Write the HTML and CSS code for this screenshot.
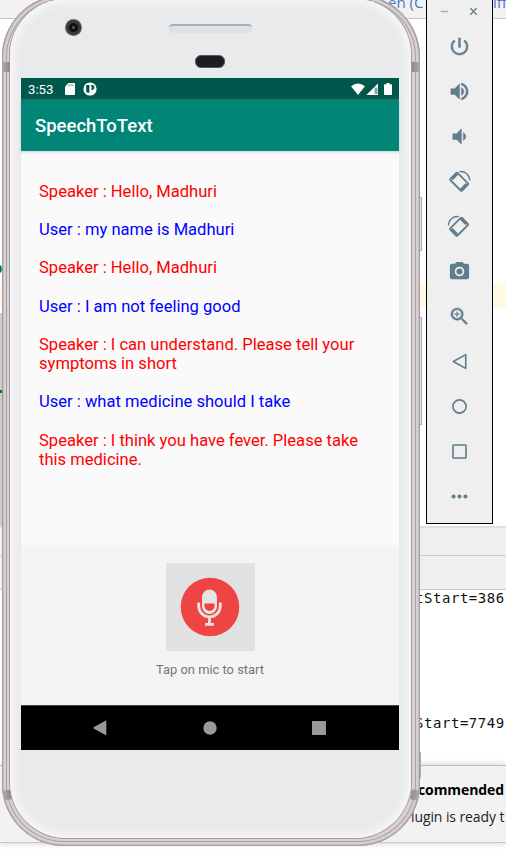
FILE: index.html
```html
<!DOCTYPE html>
<html lang="en">
<head>
<meta charset="utf-8">
<title>SpeechToText</title>
<link rel="stylesheet" href="styles.css">
</head>
<body>
<div class="desktop">
  <div class="ide">
    <div class="ide-tabs"><span>en (C</span><span class="tab-end">iff</span></div>
    <div class="editor">
      <span class="code-mark">p</span>
      <div class="current-line"></div>
      <div class="gutter"><i></i></div>
    </div>
    <div class="pane-bar"></div>
    <div class="pane-bar pane-bar-tall"></div>
    <div class="console">
      <div class="log">tStart=386</div>
      <div class="log">Start=7749</div>
    </div>
    <div class="notice"><b>commended</b><span>lugin is ready t</span></div>
  </div>

  <div class="side-key key-power"></div>
  <div class="side-key key-volume"></div>
  <div class="side-key key-low"></div>
  <div class="phone">
    <i class="antenna ant-tl"></i><i class="antenna ant-tr"></i><i class="antenna ant-bl"></i><i class="antenna ant-br"></i>
    <div class="face">
      <div class="forehead">
        <i class="camera"></i><i class="earpiece"></i><i class="sensor"></i>
      </div>
      <div class="screen">
        <div class="status">
          <span class="clock">3:53</span>
          <svg class="sd" width="10" height="12" viewBox="0 0 10 12"><path fill="#fff" d="M3.5 0H9a1 1 0 0 1 1 1v10a1 1 0 0 1-1 1H1a1 1 0 0 1-1-1V3.5z"/><path stroke="#00574b" stroke-width=".6" d="M4.1 1.3v2M6 1.3v2M7.9 1.3v2"/></svg>
          <svg class="app" width="14" height="14" viewBox="0 0 14 14"><circle cx="7" cy="7" r="6.6" fill="#fff"/><path fill="#00574b" d="M3.2 3.1h3.2v7.3l-1.3.7-1.9-1.4zM8.2 3.1h.9a2.4 2.4 0 0 1 0 4.8h-.9V6.400h.6V5h-.6z"/></svg>
          <span class="fill"></span>
          <svg width="42" height="13" viewBox="0 0 42 13"><path fill="#fff" d="M0 3.2Q7-2.3 14 3.2L7 12zM27 .5V12H15.3z"/><path stroke="#00574b" stroke-width="1" d="M24.2 4.5V11M25.8 4.5V11" opacity=".75"/><path fill="#fff" d="M35.5 0h3v1.2h1.6a.9.9 0 0 1 .9.9V11a1 1 0 0 1-1 1h-6a1 1 0 0 1-1-1V2.1a.9.9 0 0 1 .9-.9h1.6z"/></svg>
        </div>
        <div class="appbar">SpeechToText</div>
        <div class="chat">
          <p class="speaker">Speaker : Hello, Madhuri</p>
          <p class="user">User : my name is Madhuri</p>
          <p class="speaker">Speaker : Hello, Madhuri</p>
          <p class="user">User : I am not feeling good</p>
          <p class="speaker">Speaker : I can understand. Please tell your<br>symptoms in short</p>
          <p class="user">User : what medicine should I take</p>
          <p class="speaker">Speaker : I think you have fever. Please take<br>this medicine.</p>
        </div>
        <div class="mic-panel">
          <div class="mic">
            <svg width="60" height="60" viewBox="0 0 60 60"><circle cx="30" cy="30" r="29.3" fill="#ef4444"/><rect x="22" y="12.5" width="15" height="24.5" rx="7.5" fill="#e8e3e3"/><path d="M24.5 26.5h10V29a5 5 0 0 1-10 0z" fill="#ef4444"/><path d="M18.7 25.5V29a10.8 10.8 0 0 0 21.6 0v-3.5M29.5 39.8V47M25 47.3h9" fill="none" stroke="#e8e3e3" stroke-width="2.8"/></svg>
          </div>
          <div class="hint">Tap on mic to start</div>
        </div>
        <div class="navbar">
          <svg width="14" height="16" viewBox="0 0 14 16"><path fill="#999" d="M.6 7.3 13.3.2v15.2L.6 8.4z"/></svg>
          <svg width="14" height="14" viewBox="0 0 14 14"><circle cx="7" cy="7" r="6.7" fill="#999"/></svg>
          <svg width="14" height="14" viewBox="0 0 14 14"><rect width="14" height="14" rx=".8" fill="#999"/></svg>
        </div>
      </div>
    </div>
  </div>

  <div class="toolbar">
    <div class="window-buttons">
      <svg width="8" height="9" viewBox="0 0 8 9"><path d="M0 4.5h8" stroke="#a3b1b8" stroke-width="1.6"/></svg>
      <svg width="8" height="9" viewBox="0 0 8 9"><path d="M.8 1 7.2 7.8M7.2 1 .8 7.8" stroke="#6c848f" stroke-width="1.5"/></svg>
    </div>
    <svg class="tool" viewBox="0 0 24 24"><path d="M13 3h-2v10h2V3zm4.83 2.17l-1.42 1.42A6.92 6.92 0 0 1 19 12c0 3.87-3.13 7-7 7A6.995 6.995 0 0 1 7.58 6.58L6.17 5.17A8.932 8.932 0 0 0 3 12a9 9 0 0 0 18 0c0-2.74-1.23-5.18-3.17-6.83z" stroke="#607d8b" stroke-width=".5"/></svg>
    <svg class="tool" viewBox="0 0 24 24"><path d="M3 9v6h4l5 5V4L7 9H3zm13.5 3c0-1.77-1.02-3.29-2.5-4.03v8.05c1.48-.73 2.5-2.25 2.5-4.02zM14 3.23v2.06c2.89.86 5 3.54 5 6.71s-2.11 5.85-5 6.71v2.06c4.01-.91 7-4.49 7-8.77s-2.99-7.86-7-8.77z" stroke="#607d8b" stroke-width=".5"/></svg>
    <svg class="tool" viewBox="0 0 24 24"><path d="M18.5 12c0-1.77-1.02-3.29-2.5-4.03v8.05c1.48-.73 2.5-2.25 2.5-4.02zM5 9v6h4l5 5V4L9 9H5z" stroke="#607d8b" stroke-width=".5"/></svg>
    <svg class="tool" viewBox="0 0 24 24"><g fill="none" stroke="#607d8b"><rect x="6.300" y="3.600" width="10.600" height="17.300" rx="1" stroke-width="1.900" transform="rotate(-45 11.600 12.200)"/><path stroke-width="3" d="M3.800 9.600l5.800-5.800M13.700 20.500l5.800-5.800"/><path stroke-width="1.400" d="M12 1.700c6-.8 10.500 3.400 10.800 9.300"/></g></svg>
    <svg class="tool" viewBox="0 0 24 24"><g fill="none" stroke="#607d8b"><rect x="6.300" y="3.600" width="10.600" height="17.300" rx="1" stroke-width="1.900" transform="rotate(45 11.600 12.200)"/><path stroke-width="3" d="M13.600 3.800l5.800 5.800M3.800 14.700l5.800 5.800"/><path stroke-width="1.400" d="M11.200 1.700C5.200.9.700 5.100.4 11"/></g></svg>
    <svg class="tool" viewBox="0 0 24 24"><path fill-rule="evenodd" d="M9 2 7.17 4H4c-1.1 0-2 .9-2 2v12c0 1.1.9 2 2 2h16c1.1 0 2-.9 2-2V6c0-1.1-.9-2-2-2h-3.17L15 2H9zm3 15a5 5 0 1 1 0-10 5 5 0 0 1 0 10zm0-1.8a3.2 3.2 0 1 0 0-6.4 3.2 3.2 0 0 0 0 6.4z"/></svg>
    <svg class="tool" viewBox="0 0 24 24"><path d="M15.5 14h-.79l-.28-.27A6.471 6.471 0 0 0 16 9.5 6.5 6.5 0 1 0 9.5 16c1.61 0 3.09-.59 4.23-1.57l.27.28v.79l5 4.99L20.49 19l-4.99-5zm-6 0C7.01 14 5 11.99 5 9.5S7.01 5 9.5 5 14 7.01 14 9.5 11.99 14 9.5 14zM12 9h-2V7H9v2H7v1h2v2h1v-2h2V9z" stroke="#607d8b" stroke-width=".4"/></svg>
    <svg class="tool" viewBox="0 0 24 24"><path class="line" d="M18.500 4.800v14.400L5.500 12z"/></svg>
    <svg class="tool" viewBox="0 0 24 24"><circle class="line" cx="12" cy="12" r="6.900"/></svg>
    <svg class="tool" viewBox="0 0 24 24"><rect class="line" x="5.200" y="5.200" width="13.600" height="13.600" rx=".6"/></svg>
    <svg class="tool" viewBox="0 0 24 24"><circle cx="5.800" cy="12" r="2.100"/><circle cx="12" cy="12" r="2.100"/><circle cx="18.200" cy="12" r="2.100"/></svg>
  </div>
</div>
</body>
</html>
```

FILE: styles.css
```css
* { box-sizing: border-box; }
body { margin: 0; font-family: Roboto, sans-serif; }
svg { display: block; }
.desktop { position: relative; width: 506px; height: 853px; overflow: hidden; background: #fff; }

.ide { display: flex; flex-direction: column; height: 853px; }
.ide-tabs { height: 19px; background: #f2f2f2; border-bottom: 1px solid #c9c9c9; display: flex; padding-left: 388px; font: 15px/16px "Open Sans", sans-serif; color: #4a78c8; overflow: hidden; }
.ide-tabs span { margin-top: -6px; width: 105px; flex: none; white-space: nowrap; }
.ide-tabs .tab-end { width: 13px; }
.editor { height: 507px; padding-top: 243px; }
.code-mark { display: block; height: 21px; margin-left: -6px; font: bold 14px/14px "Liberation Mono", monospace; color: #008000; }
.current-line { height: 25px; background: #fffae3; }
.gutter { width: 2px; height: 213px; margin-top: 5px; padding-top: 77px; background: #ccc; }
.gutter i { display: block; width: 2px; height: 3px; background: #008000; }
.pane-bar { height: 29px; background: #f0f0f0; border-top: 2px solid #e0e0e0; }
.pane-bar-tall { height: 35px; border-top: 1px solid #ccc; border-bottom: 1px solid #ccc; }
.console { height: 175px; padding: 0 0 0 415px; font: 14px/20px "DejaVu Sans Mono", monospace; letter-spacing: .55px; color: #111; overflow: hidden; white-space: nowrap; }
.log { height: 125px; line-height: 16px; }
.notice { height: 78px; padding: 10px 0 0 411px; background: #f2f2f2; border-top: 1px solid #bdbdbd; border-bottom: 1px solid #c8c8c8; box-shadow: 0 0 7px #ccc; font: 14px/27px "Open Sans", sans-serif; letter-spacing: -.1px; white-space: nowrap; overflow: hidden; color: #222; }
.notice b, .notice span { display: block; }
.notice b { color: #000; padding-left: 7px; }

.side-key { position: absolute; background: #dfe2e2; border: 1px solid #a9adab; border-left: 0; }
.key-power { left: 416px; top: 197px; width: 6px; height: 54px; }
.key-volume { left: 416px; top: 317px; width: 6px; height: 108px; }
.key-low { left: 416px; top: 752px; width: 5px; height: 26px; }

.phone { position: absolute; left: 2px; top: -5px; width: 418px; height: 851px; padding: 4px 9px 4px 8px; border-radius: 62px; background: #d8cfd3; box-shadow: inset 0 0 0 1px #a39b9f, inset 0 0 0 2px #c9c0c4, inset 0 0 0 4px #d8cfd3, inset 0 0 0 5px #a59fa2, inset 0 0 0 7px #d9d2d5; }
.antenna { position: absolute; z-index: 1; width: 8px; height: 10px; background: linear-gradient(90deg, #b0a9ac, #908a8e); }
.ant-tl { left: 0; top: 67px; }
.ant-tr { right: 0; top: 67px; transform: scaleX(-1); }
.ant-bl { left: 1px; bottom: 46px; transform: rotate(-10deg); }
.ant-br { right: 1px; bottom: 46px; transform: rotate(10deg) scaleX(-1); }
.face { position: relative; width: 401px; height: 839px; border-radius: 56px; background: #e9eaec; box-shadow: inset 0 0 6px 5px #f5f5f8, 0 0 0 1px #a29c9f; padding: 0 11px; }
.forehead { position: relative; height: 79px; }
.camera { position: absolute; left: 44px; top: 20px; width: 17px; height: 17px; border-radius: 50%; background: radial-gradient(circle, #5e5a2c 0 1px, #111 2px 4px, #37393b 5px 7px, #686a6c 8px); }
.earpiece { position: absolute; left: 148px; top: 25px; width: 83px; height: 9px; border-radius: 4px; background: #dfe2e5; border-top: 2px solid #a8afb5; }
.sensor { position: absolute; left: 174px; top: 56px; width: 30px; height: 13px; border-radius: 6px; background: #1c1d20; border: 1px solid #55575a; }

.screen { position: relative; width: 378px; height: 672px; display: flex; flex-direction: column; background: #fafafa; }
.status { height: 22px; background: #00574b; display: flex; align-items: center; padding: 0 6px 0 7px; color: #fff; }
.clock { width: 37px; font-size: 13.2px; line-height: 23px; }
.app { margin-left: 8px; }
.fill { flex: 1; }
.appbar { height: 51px; background: #008577; color: #fff; font-size: 18.5px; font-weight: 500; line-height: 53px; padding-left: 14px; box-shadow: 0 1px 3px #ccc; }
.chat { height: 394px; padding: 30.7px 18px 0; font-size: 16.57px; line-height: 19.16px; white-space: nowrap; }
.chat p { margin: 0 0 19.16px; }
.speaker { color: #f00; }
.user { color: #00f; }
.mic-panel { height: 160px; background: #f4f4f4; padding-top: 18px; display: flex; flex-direction: column; align-items: center; }
.mic { width: 89px; height: 88px; background: #e2e2e2; display: flex; align-items: center; justify-content: center; }
.hint { margin-top: 10px; font-size: 12.9px; line-height: 18px; color: #757575; }
.navbar { height: 45px; background: #000; border-top: 1px solid #444; display: flex; align-items: center; justify-content: space-between; padding: 0 73px 0 72px; }

.toolbar { position: absolute; left: 426px; top: -2px; width: 67px; height: 526px; border: 1px solid #000; background: #efefef; display: flex; flex-direction: column; align-items: center; }
.window-buttons { width: 37px; height: 25px; padding-top: 8px; display: flex; justify-content: space-between; transform: translateX(-.5px); }
.tool { width: 23px; height: 23px; margin: 11px 1px 11px 0; overflow: visible; fill: #607d8b; flex: none; }
.line { fill: none; stroke: #607d8b; stroke-width: 1.7; stroke-linejoin: round; }
```
